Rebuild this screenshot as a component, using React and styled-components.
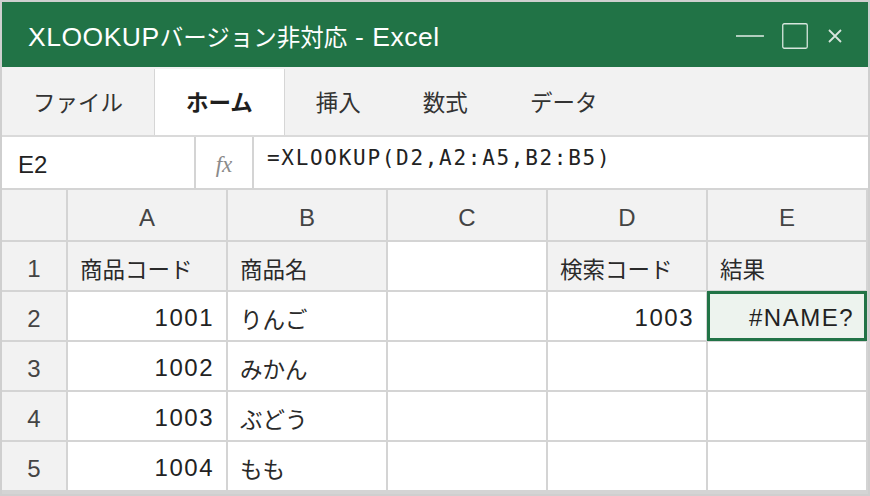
import React from 'react';
import styled, { createGlobalStyle, css } from 'styled-components';

const Global = createGlobalStyle`
  html, body { margin: 0; padding: 0; background: #fff; overflow: hidden; }
  *, *::before, *::after { box-sizing: border-box; }
`;

const SANS = `"Liberation Sans", "Noto Sans CJK JP", sans-serif`;
const GREEN = '#217346';
const LINE = '#d4d4d4';

const Frame = styled.div`
  width: 870px;
  height: 496px;
  border: 2px solid #cfcfcf;
  background: ${LINE};
  display: flex;
  flex-direction: column;
  font-family: ${SANS};
  color: #333;
  overflow: hidden;
`;

const TitleBar = styled.header`
  flex: none;
  height: 65px;
  background: ${GREEN};
  color: #fff;
  display: flex;
  align-items: center;
  justify-content: space-between;
  padding: 3px 26px 0 26px;
`;

const Title = styled.h1`
  margin: 0;
  font-weight: 400;
  font-size: 23.5px;
  white-space: nowrap;
`;

const Latin = styled.span`
  font-size: 26.5px;
  letter-spacing: 0.5px;
`;

const Controls = styled.div`
  display: flex;
  align-items: center;
  gap: 18px;
  color: rgba(255, 255, 255, 0.82);
  & > svg:last-child { margin-left: 2px; }
`;

const TabBar = styled.nav`
  flex: none;
  height: 70px;
  background: #f2f2f2;
  border-bottom: 2px solid #dadada;
  display: flex;
`;

const Tab = styled.div`
  display: flex;
  align-items: center;
  padding: 0 31px;
  font-size: 22.5px;
  color: #333;
  ${(p) =>
    p.$active &&
    css`
      background: #fff;
      color: #1f1f1f;
      font-weight: 700;
      border-left: 1px solid #d6d6d6;
      border-right: 1px solid #d6d6d6;
      margin-top: 2px;
      padding-bottom: 2px;
    `}
`;

const FormulaBar = styled.div`
  flex: none;
  height: 53px;
  background: #fff;
  border-bottom: 2px solid ${LINE};
  display: flex;
`;

const NameBox = styled.div`
  width: 194px;
  border-right: 2px solid ${LINE};
  display: flex;
  align-items: center;
  padding: 4px 0 0 16px;
  font-size: 24px;
  color: #222;
`;

const FxBox = styled.div`
  width: 58px;
  border-right: 2px solid ${LINE};
  display: flex;
  align-items: center;
  justify-content: center;
  padding-top: 4px;
  font-family: "Liberation Serif", serif;
  font-style: italic;
  font-size: 23px;
  color: #8a8a8a;
`;

const Formula = styled.div`
  flex: 1;
  display: flex;
  align-items: center;
  padding: 0 0 9px 13px;
  font-family: "DejaVu Sans Mono", monospace;
  font-size: 21px;
  letter-spacing: 1.7px;
  color: #222;
`;

const Sheet = styled.div`
  display: grid;
  grid-template-columns: 64px repeat(5, 158px);
  grid-template-rows: 50px repeat(5, 48px);
  gap: 2px;
  background: ${LINE};
`;

const HeadCell = styled.div`
  background: #f2f2f2;
  display: flex;
  align-items: center;
  justify-content: center;
  padding-top: 6px;
  font-size: 24px;
  color: #444;
`;

const Cell = styled.div`
  background: ${(p) => (p.$head ? '#f2f2f2' : '#fff')};
  display: flex;
  align-items: center;
  padding: 3px 12px 0 12px;
  font-size: 22.5px;
  color: #2a2a2a;
  white-space: nowrap;
  ${(p) =>
    p.$num &&
    css`
      justify-content: flex-end;
      font-size: 24px;
      letter-spacing: 1.5px;
      color: #222;
    `}
  ${(p) =>
    p.$selected &&
    css`
      background: #edf3ee;
      outline: 3px solid ${GREEN};
      outline-offset: -2px;
    `}
`;

const cols = ['A', 'B', 'C', 'D', 'E'];

const rows = [
  [{ t: '商品コード', h: true }, { t: '商品名', h: true }, {}, { t: '検索コード', h: true }, { t: '結果', h: true }],
  [{ t: '1001', n: true }, { t: 'りんご' }, {}, { t: '1003', n: true }, { t: '#NAME?', n: true, s: true }],
  [{ t: '1002', n: true }, { t: 'みかん' }, {}, {}, {}],
  [{ t: '1003', n: true }, { t: 'ぶどう' }, {}, {}, {}],
  [{ t: '1004', n: true }, { t: 'もも' }, {}, {}, {}],
];

const tabs = ['ファイル', 'ホーム', '挿入', '数式', 'データ'];

export default function App() {
  return (
    <>
      <Global />
      <Frame>
        <TitleBar>
          <Title>
            <Latin>XLOOKUP</Latin>バージョン非対応<Latin> - Excel</Latin>
          </Title>
          <Controls>
            <svg width="28" height="4" viewBox="0 0 28 4">
              <line x1="0" y1="2" x2="28" y2="2" stroke="currentColor" strokeWidth="1.6" />
            </svg>
            <svg width="26" height="26" viewBox="0 0 26 26">
              <rect x="0.75" y="0.75" width="24.5" height="24.5" rx="1.5" fill="none" stroke="currentColor" strokeWidth="1.3" />
            </svg>
            <svg width="14" height="14" viewBox="0 0 14 14">
              <path d="M1 1 L13 13 M13 1 L1 13" stroke="currentColor" strokeWidth="1.8" fill="none" />
            </svg>
          </Controls>
        </TitleBar>

        <TabBar>
          {tabs.map((t) => (
            <Tab key={t} $active={t === 'ホーム'}>
              {t}
            </Tab>
          ))}
        </TabBar>

        <FormulaBar>
          <NameBox>E2</NameBox>
          <FxBox>fx</FxBox>
          <Formula>=XLOOKUP(D2,A2:A5,B2:B5)</Formula>
        </FormulaBar>

        <Sheet>
          <HeadCell />
          {cols.map((c) => (
            <HeadCell key={c}>{c}</HeadCell>
          ))}
          {rows.map((r, i) => (
            <React.Fragment key={i}>
              <HeadCell>{i + 1}</HeadCell>
              {r.map((c, j) => (
                <Cell key={j} $head={c.h} $num={c.n} $selected={c.s}>
                  {c.t}
                </Cell>
              ))}
            </React.Fragment>
          ))}
        </Sheet>
      </Frame>
    </>
  );
}
